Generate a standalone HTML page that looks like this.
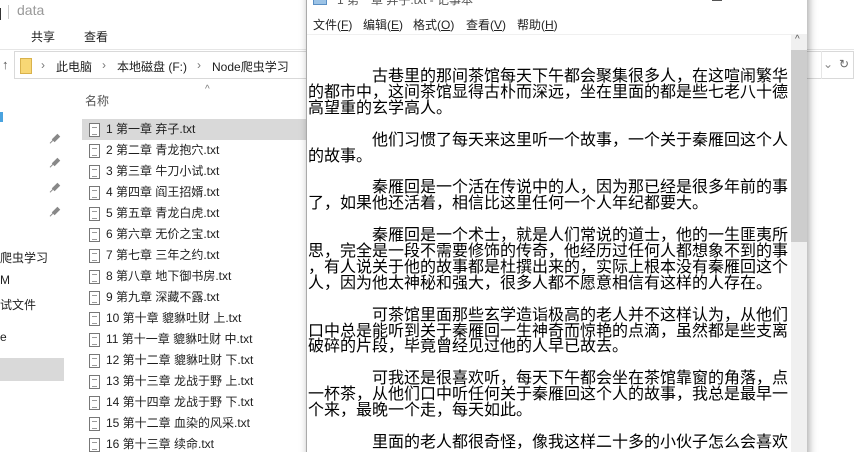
<!DOCTYPE html>
<html><head><meta charset="utf-8"><style>
*{margin:0;padding:0;box-sizing:border-box}
html,body{width:854px;height:452px;overflow:hidden}
body{background:#fff;position:relative;font-family:"Liberation Sans","Noto Sans CJK SC",sans-serif;color:#1e1e1e}
.a{position:absolute;white-space:nowrap}
.f{font-size:12px}
.row{position:absolute;left:82px;width:224px;height:21px;font-size:12px;line-height:21px}
.row .ic{position:absolute;left:7px;top:4px;width:11px;height:14px;border:1px solid #777;background:#fff}
.row .ic:before{content:"";position:absolute;left:2px;right:2px;top:3px;height:6px;border-top:1px solid #999;border-bottom:1px solid #999}
.row span{position:absolute;left:24px}
.pin{position:absolute;left:52px;width:8px;height:4px;background:#888;transform:rotate(-45deg)}
.pin:after{content:"";position:absolute;left:-4px;top:1px;width:5px;height:1px;background:#888}
#np{position:absolute;left:306px;top:-10px;width:501px;height:470px;background:#fff;border-left:1px solid #aaa;box-shadow:2px 0 8px rgba(0,0,0,.35)}
.menu{position:absolute;top:22px;font-size:12px;color:#222}
#txt{position:absolute;left:1px;top:77px;font-family:"WenQuanYi Zen Hei","Noto Sans CJK SC",sans-serif;font-size:16px;line-height:15.9px;color:#000;white-space:pre}
</style></head><body>
<div class="a" style="left:0;top:8px;width:1px;height:12px;background:#333"></div>
<div class="a" style="left:8px;top:5px;width:1px;height:14px;background:#ccc"></div>
<div class="a" style="left:17px;top:2px;font-size:14px;color:#999">data</div>
<div class="a f" style="left:31px;top:28px">共享</div>
<div class="a f" style="left:84px;top:28px">查看</div>
<div class="a" style="left:0;top:49px;width:854px;height:1px;background:#e6e6e6"></div>
<div class="a" style="left:2px;top:57px;font-size:13px;color:#555">↑</div>
<div class="a" style="left:14px;top:51px;width:840px;height:28px;border:1px solid #d9d9d9"></div>
<div class="a" style="left:20px;top:58px;width:12px;height:16px;background:#f8d775;border:1px solid #d9b24c"></div>
<div class="a f" style="left:41px;top:58px;color:#777">›</div>
<div class="a f" style="left:56px;top:58px">此电脑</div>
<div class="a f" style="left:102px;top:58px;color:#777">›</div>
<div class="a f" style="left:117px;top:58px">本地磁盘 (F:)</div>
<div class="a f" style="left:197px;top:58px;color:#777">›</div>
<div class="a f" style="left:212px;top:58px">Node爬虫学习</div>
<div class="a" style="left:821px;top:51px;width:1px;height:28px;background:#e6e6e6"></div>
<div class="a f" style="left:823px;top:57px;color:#888">⌄</div>
<div class="a f" style="left:839px;top:57px;color:#666">↻</div>
<div class="a" style="left:205px;top:84px;font-size:10px;color:#777">^</div>
<div class="a f" style="left:85px;top:92px;color:#555">名称</div>
<div class="a" style="left:0;top:112px;width:3px;height:10px;background:#4aa3df"></div>
<div class="pin" style="top:136px"></div>
<div class="pin" style="top:160px"></div>
<div class="pin" style="top:185px"></div>
<div class="pin" style="top:209px"></div>
<div class="a f" style="left:0;top:249px">爬虫学习</div>
<div class="a f" style="left:0;top:273px">M</div>
<div class="a f" style="left:0;top:296px">试文件</div>
<div class="a f" style="left:0;top:330px">e</div>
<div class="a" style="left:0;top:358px;width:64px;height:23px;background:#d9d9d9"></div>
<div class="row" style="top:119px;background:#d9d9d9"><i class="ic"></i><span>1 第一章 弃子.txt</span></div>
<div class="row" style="top:140px"><i class="ic"></i><span>2 第二章 青龙抱穴.txt</span></div>
<div class="row" style="top:161px"><i class="ic"></i><span>3 第三章 牛刀小试.txt</span></div>
<div class="row" style="top:182px"><i class="ic"></i><span>4 第四章 阎王招婿.txt</span></div>
<div class="row" style="top:203px"><i class="ic"></i><span>5 第五章 青龙白虎.txt</span></div>
<div class="row" style="top:224px"><i class="ic"></i><span>6 第六章 无价之宝.txt</span></div>
<div class="row" style="top:245px"><i class="ic"></i><span>7 第七章 三年之约.txt</span></div>
<div class="row" style="top:266px"><i class="ic"></i><span>8 第八章 地下御书房.txt</span></div>
<div class="row" style="top:287px"><i class="ic"></i><span>9 第九章 深藏不露.txt</span></div>
<div class="row" style="top:308px"><i class="ic"></i><span>10 第十章 貔貅吐财 上.txt</span></div>
<div class="row" style="top:329px"><i class="ic"></i><span>11 第十一章 貔貅吐财 中.txt</span></div>
<div class="row" style="top:350px"><i class="ic"></i><span>12 第十二章 貔貅吐财 下.txt</span></div>
<div class="row" style="top:371px"><i class="ic"></i><span>13 第十三章 龙战于野 上.txt</span></div>
<div class="row" style="top:392px"><i class="ic"></i><span>14 第十四章 龙战于野 下.txt</span></div>
<div class="row" style="top:413px"><i class="ic"></i><span>15 第十二章 血染的风采.txt</span></div>
<div class="row" style="top:434px"><i class="ic"></i><span>16 第十三章 续命.txt</span></div>
<div id="np">
<div class="a" style="left:6px;top:4px;width:14px;height:11px;background:#9cc3e6;border:1px solid #5a8fc4"></div>
<div class="a f" style="left:30px;top:1px;color:#555">1 第一章 弃子.txt - 记事本</div>
<div class="a" style="left:405px;top:3px;width:10px;height:8px;border:1px solid #555"></div>
<div class="a f" style="left:455px;top:-2px;color:#555">✕</div>
<div class="menu" style="left:6px;top:26px">文件(<u>F</u>)</div>
<div class="menu" style="left:56px;top:26px">编辑(<u>E</u>)</div>
<div class="menu" style="left:106px;top:26px">格式(<u>O</u>)</div>
<div class="menu" style="left:159px;top:26px">查看(<u>V</u>)</div>
<div class="menu" style="left:210px;top:26px">帮助(<u>H</u>)</div>
<div class="a" style="left:0;top:44px;width:500px;height:1px;background:#f0f0f0"></div>
<div class="a" style="left:484px;top:45px;width:16px;height:430px;background:#f0f0f0"></div>
<div class="a" style="left:484px;top:60px;width:16px;height:192px;background:#cdcdcd"></div>
<div class="a" style="left:488px;top:44px;font-size:10px;color:#555">^</div>
<div id="txt">　　　　古巷里的那间茶馆每天下午都会聚集很多人，在这喧闹繁华
的都市中，这间茶馆显得古朴而深远，坐在里面的都是些七老八十德
高望重的玄学高人。

　　　　他们习惯了每天来这里听一个故事，一个关于秦雁回这个人
的故事。

　　　　秦雁回是一个活在传说中的人，因为那已经是很多年前的事
了，如果他还活着，相信比这里任何一个人年纪都要大。

　　　　秦雁回是一个术士，就是人们常说的道士，他的一生匪夷所
思，完全是一段不需要修饰的传奇，他经历过任何人都想象不到的事
，有人说关于他的故事都是杜撰出来的，实际上根本没有秦雁回这个
人，因为他太神秘和强大，很多人都不愿意相信有这样的人存在。

　　　　可茶馆里面那些玄学造诣极高的老人并不这样认为，从他们
口中总是能听到关于秦雁回一生神奇而惊艳的点滴，虽然都是些支离
破碎的片段，毕竟曾经见过他的人早已故去。

　　　　可我还是很喜欢听，每天下午都会坐在茶馆靠窗的角落，点
一杯茶，从他们口中听任何关于秦雁回这个人的故事，我总是最早一
个来，最晚一个走，每天如此。

　　　　里面的老人都很奇怪，像我这样二十多的小伙子怎么会喜欢</div>
</div>
</body></html>
